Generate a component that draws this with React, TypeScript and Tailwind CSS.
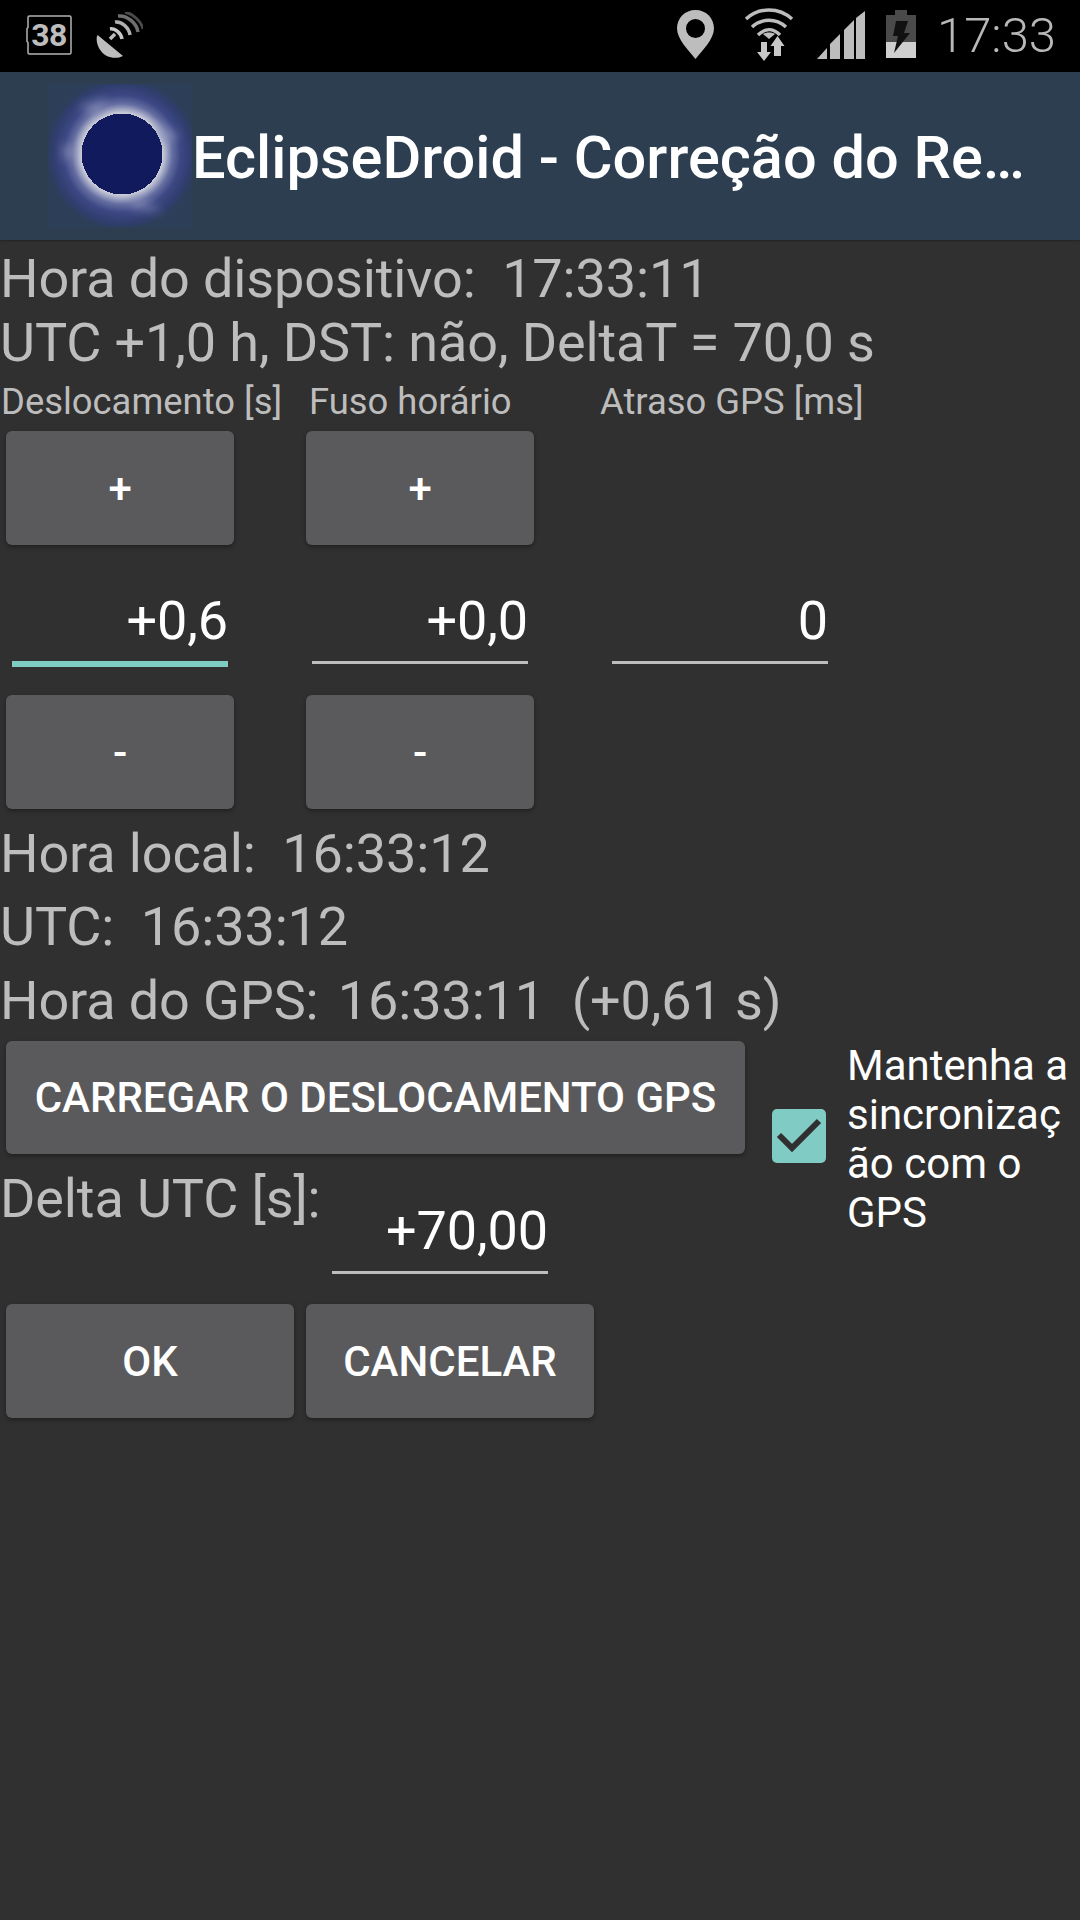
import React from 'react';

const roboto = "font-['Roboto',sans-serif]";

function BatteryCount() {
  return (
    <div className="relative w-[46px] h-[40px]">
      <svg width="46" height="40" viewBox="0 0 46 40" className="absolute left-0 top-0">
        <path d="M3.5 1h40a1.5 1.5 0 0 1 1.500 1.500v35a1.500 1.500 0 0 1-1.500 1.500h-40a1.500 1.500 0 0 1-1.500-1.500v-10l-1-1v-13l1-1v-10a1.500 1.500 0 0 1 1.500-1.500z" fill="none" stroke="#b4b4b4" strokeWidth="1.500" />
      </svg>
      <div className="absolute inset-0 flex items-center justify-center text-[#bdbdbd] text-[32px] leading-none font-bold tracking-[-0.5px]">38</div>
    </div>
  );
}

function SatelliteIcon() {
  return (
    <svg width="47" height="46" viewBox="0 0 47 46">
      <path d="M1 24 C2 23 3 24 4 25 L27 44 C19 48 9 45 5 39 C1 34 0 28 1 24z" fill="#bdbdbd" />
      <path d="M14 27 L19 22" stroke="#bdbdbd" strokeWidth="3.500" />
      <path d="M14 17 C19 16 25 21 26 27" fill="none" stroke="#c8c8c8" strokeWidth="3.500" />
      <path d="M19 10 C26 9 33 16 34 23" fill="none" stroke="#b0b0b0" strokeWidth="3.500" />
      <path d="M22 4 C32 3 41 12 42 20" fill="none" stroke="#6f6f6f" strokeWidth="3.500" />
      <path d="M29 0 C37 2 45 9 47 17" fill="none" stroke="#4a4a4a" strokeWidth="3" />
    </svg>
  );
}

function PinIcon() {
  return (
    <svg width="37" height="49" viewBox="0 0 37 49">
      <path fillRule="evenodd" d="M18.500 0C8 0 0 8 0 18.500 0 29 12 41 18.500 49 25 41 37 29 37 18.500 37 8 29 0 18.500 0zm0 9a9.500 9.500 0 1 1 0 19 9.500 9.500 0 0 1 0-19z" fill="#bdbdbd" />
    </svg>
  );
}

function WifiIcon() {
  return (
    <svg width="50" height="53" viewBox="0 0 50 53">
      <path d="M2 11 C15 -1 35 -1 48 11" fill="none" stroke="#bdbdbd" strokeWidth="3.500" />
      <path d="M8 19 C18 10 32 10 42 19" fill="none" stroke="#bdbdbd" strokeWidth="3.500" />
      <path d="M14 27 C21 20 29 20 36 27" fill="none" stroke="#bdbdbd" strokeWidth="3.500" />
      <path d="M25 31 L19 26 C22 24 28 24 31 26z" fill="#bdbdbd" />
      <path d="M17 34h6v10h4l-7 9-7-9h4z" fill="#c8c8c8" />
      <path d="M33.500 28l7 10h-3.500v10h-7v-10h-3.500z" fill="#c8c8c8" />
    </svg>
  );
}

function SignalIcon() {
  return (
    <svg width="48" height="48" viewBox="0 0 48 48">
      <path d="M0 48L10 37V48z" fill="#bdbdbd" />
      <path d="M13 33L23 23V48H13z" fill="#bdbdbd" />
      <path d="M27 19L37 9V48H27z" fill="#bdbdbd" />
      <path d="M39 7L48 0V48H39z" fill="#bdbdbd" />
    </svg>
  );
}

function ChargingIcon() {
  return (
    <svg width="30" height="48" viewBox="0 0 30 48">
      <rect x="9" y="0" width="12" height="5" fill="#4a4a4a" />
      <rect x="0" y="5" width="30" height="27" fill="#4a4a4a" />
      <rect x="0" y="32" width="30" height="16" fill="#cfcfcf" />
      <path d="M10 11h12l-4 12h6L8 43l4-17H7z" fill="#111111" />
    </svg>
  );
}

function EclipseLogo() {
  return (
    <svg width="144" height="144" viewBox="0 0 144 144">
      <defs>
        <radialGradient id="corona" cx="74" cy="70" r="76" gradientUnits="userSpaceOnUse">
          <stop offset="0.54" stopColor="#c9cad6" />
          <stop offset="0.59" stopColor="#a0a5c3" />
          <stop offset="0.66" stopColor="#666fa2" />
          <stop offset="0.77" stopColor="#3d4884" />
          <stop offset="0.9" stopColor="#303e70" />
          <stop offset="1" stopColor="#2c3e58" />
        </radialGradient>
        <filter id="soft">
          <feGaussianBlur stdDeviation="5" />
        </filter>
      </defs>
      <rect width="144" height="144" fill="url(#corona)" />
      <g filter="url(#soft)" fill="#8f96bd" opacity="0.6">
        <path d="M30 22L60 14 50 34z" />
        <path d="M106 38L132 52 112 62z" />
        <path d="M88 112L116 128 82 124z" />
        <path d="M14 60L32 66 16 78z" />
      </g>
      <circle cx="74" cy="70" r="40.500" fill="#111a5c" shapeRendering="crispEdges" />
    </svg>
  );
}

function GrayButton({ label, className }: { label: string; className: string }) {
  return (
    <div className={`flex items-center justify-center bg-[#5a5a5c] rounded-[6px] shadow-[0_2px_4px_rgba(0,0,0,0.35)] text-white font-medium text-[42px] ${className}`}>
      {label}
    </div>
  );
}

function ValueField({ value, focused, className }: { value: string; focused?: boolean; className?: string }) {
  return (
    <div className={`w-[216px] flex items-end justify-end pb-[8px] text-white text-[54px] leading-[64px] ${focused ? 'border-b-[6px] border-[#80cbc4] h-[79px]' : 'border-b-[3px] border-[#bdbdbd] h-[76px]'} ${className ?? ''}`}>
      {value}
    </div>
  );
}

export default function App() {
  return (
    <div className={`${roboto} w-[1080px] h-[1920px] bg-[#303030] overflow-hidden flex flex-col`}>
      {/* status bar */}
      <div className="h-[72px] bg-black flex items-start shrink-0">
        <div className="ml-[26px] mt-[15px]"><BatteryCount /></div>
        <div className="ml-[24px] mt-[12px]"><SatelliteIcon /></div>
        <div className="ml-auto mt-[10px]"><PinIcon /></div>
        <div className="ml-[30px] mt-[8px]"><WifiIcon /></div>
        <div className="ml-[23px] mt-[11px]"><SignalIcon /></div>
        <div className="ml-[21px] mt-[10px]"><ChargingIcon /></div>
        <div className="ml-[21px] mr-[24px] mt-[7px] text-[#b8b8b8] text-[49px] leading-[58px] font-light">17:33</div>
      </div>

      {/* action bar */}
      <div className="h-[168px] bg-[#2c3e50] flex items-center shrink-0 shadow-[0_1px_2px_rgba(0,0,0,0.3)]">
        <div className="ml-[48px] shrink-0"><EclipseLogo /></div>
        <div className="ml-[0px] mt-[6px] text-white text-[59.5px] font-medium leading-none whitespace-nowrap">EclipseDroid - Correção do Re…</div>
      </div>

      {/* form */}
      <div className="flex flex-col text-[#bdbdbd] tracking-[-0.12px]">
        <div className="mt-[7px] text-[54px] leading-[64px] whitespace-pre">Hora do dispositivo:  17:33:11</div>
        <div className="text-[54px] leading-[64px]">UTC +1,0 h, DST: não, DeltaT = 70,0 s</div>

        <div className="flex gap-[60px] mt-[6px] h-[42px] text-[36.4px] leading-[42px] tracking-normal">
          <div className="w-[240px] pl-[1px] whitespace-nowrap">Deslocamento [s]</div>
          <div className="w-[240px] pl-[9px] whitespace-nowrap">Fuso horário</div>
          <div className="w-[240px] whitespace-nowrap">Atraso GPS [ms]</div>
        </div>

        <div className="flex gap-[60px] mt-[8px] pl-[6px]">
          <GrayButton label="+" className="w-[228px] h-[114px]" />
          <GrayButton label="+" className="w-[228px] h-[114px] ml-[12px]" />
        </div>

        <div className="flex mt-[43px] pl-[12px] items-start">
          <ValueField value="+0,6" focused />
          <ValueField value="+0,0" className="ml-[84px]" />
          <ValueField value="0" className="ml-[84px]" />
        </div>

        <div className="flex gap-[60px] mt-[28px] pl-[6px]">
          <GrayButton label="-" className="w-[228px] h-[114px]" />
          <GrayButton label="-" className="w-[228px] h-[114px] ml-[12px]" />
        </div>

        <div className="mt-[13px] text-[54px] leading-[64px] whitespace-pre">Hora local:  16:33:12</div>
        <div className="mt-[9px] text-[54px] leading-[64px] whitespace-pre">UTC:  16:33:12</div>
        <div className="mt-[10px] text-[54px] leading-[64px] whitespace-pre">Hora do GPS: <span className="ml-[6px]">16:33:11</span>  (+0,61 s)</div>

        <div className="flex items-start mt-[8px]">
          <div className="w-[772px] shrink-0">
            <GrayButton label="CARREGAR O DESLOCAMENTO GPS" className="ml-[6px] w-[739px] h-[113px] tracking-normal" />
            <div className="flex items-start">
              <div className="mt-[13px] text-[54px] leading-[64px] w-[332px] shrink-0">Delta UTC [s]:</div>
              <ValueField value="+70,00" className="mt-[44px]" />
            </div>
          </div>
          <div className="flex items-center">
            <div className="w-[54px] h-[54px] rounded-[5px] bg-[#80cbc4] shrink-0 mt-[-6px]">
              <svg width="54" height="54" viewBox="0 0 54 54">
                <path d="M7 26L20 39L47 12" fill="none" stroke="#303030" strokeWidth="6" />
              </svg>
            </div>
            <div className="ml-[21px] w-[226px] text-white text-[42px] leading-[49px] break-words tracking-normal">Mantenha a sincronização com o GPS</div>
          </div>
        </div>

        <div className="flex gap-[12px] mt-[30px] pl-[6px] tracking-normal">
          <GrayButton label="OK" className="w-[288px] h-[114px]" />
          <GrayButton label="CANCELAR" className="w-[288px] h-[114px]" />
        </div>
      </div>
    </div>
  );
}
